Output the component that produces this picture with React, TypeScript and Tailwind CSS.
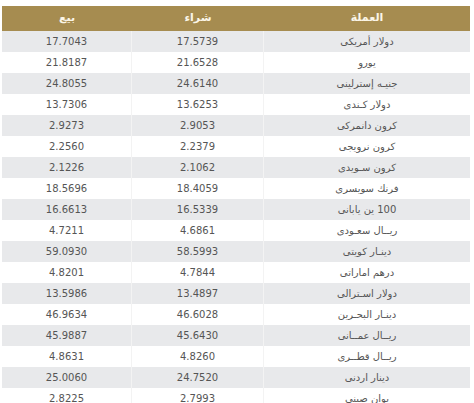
import React from "react";

interface Rate {
  name: string;
  buy: string;
  sell: string;
}

const rates: Rate[] = [
  { name: "دولار أمريكى", buy: "17.5739", sell: "17.7043" },
  { name: "يورو", buy: "21.6528", sell: "21.8187" },
  { name: "جنيـه إسترلينى", buy: "24.6140", sell: "24.8055" },
  { name: "دولار كـندى", buy: "13.6253", sell: "13.7306" },
  { name: "كرون دانمركى", buy: "2.9053", sell: "2.9273" },
  { name: "كرون نرويجى", buy: "2.2379", sell: "2.2560" },
  { name: "كرون سـويدى", buy: "2.1062", sell: "2.1226" },
  { name: "فرنك سويسرى", buy: "18.4059", sell: "18.5696" },
  { name: "100 ين يابانى", buy: "16.5339", sell: "16.6613" },
  { name: "ريــال سعـودى", buy: "4.6861", sell: "4.7211" },
  { name: "دينـار كويتى", buy: "58.5993", sell: "59.0930" },
  { name: "درهم اماراتى", buy: "4.7844", sell: "4.8201" },
  { name: "دولار اسـترالى", buy: "13.4897", sell: "13.5986" },
  { name: "دينـار البحـرين", buy: "46.6028", sell: "46.9634" },
  { name: "ريــال عمــانى", buy: "45.6430", sell: "45.9887" },
  { name: "ريــال قطــرى", buy: "4.8260", sell: "4.8631" },
  { name: "دينار اردنى", buy: "24.7520", sell: "25.0060" },
  { name: "يوان صينى", buy: "2.7993", sell: "2.8225" },
];

const font = "font-['DejaVu_Sans','Noto_Sans',sans-serif]";

export default function App() {
  return (
    <div className="w-[474px] h-[403px] overflow-hidden bg-white pt-[6px] pl-[2px] pr-[4px]">
      <div dir="rtl" className={`w-[468px] ${font}`}>
        {/* header */}
        <div className="grid grid-cols-[206px_132px_130px] h-[25px] bg-[#a68c50] text-[#fbf6e8] text-[11px] font-bold">
          <div className="flex items-center justify-center">العملة</div>
          <div className="flex items-center justify-center">شراء</div>
          <div className="flex items-center justify-center">بيع</div>
        </div>

        {rates.map((r, i) => (
          <div
            key={i}
            className={`grid grid-cols-[206px_132px_130px] h-[21px] text-[10px] text-[#555] ${
              i % 2 === 0 ? "bg-[#e8e9eb]" : "bg-white"
            }`}
          >
            <div className="flex items-center justify-center">{r.name}</div>
            <div className="flex items-center justify-center border-r border-[#f3f3f3]">{r.buy}</div>
            <div className="flex items-center justify-center border-r border-[#f3f3f3]">{r.sell}</div>
          </div>
        ))}
      </div>
    </div>
  );
}
